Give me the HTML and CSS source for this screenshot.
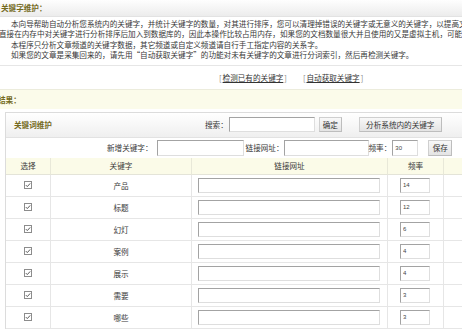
FILE: index.html
```html
<!DOCTYPE html>
<html lang="zh-CN">
<head>
<meta charset="utf-8">
<title>关键字维护</title>
<link rel="stylesheet" href="styles.css">
</head>
<body>
<div class="page">
  <div class="title-bar"><span class="title">关键字维护：</span></div>
  <div class="intro">
    <div class="line indent">本向导帮助自动分析您系统内的关键字，并统计关键字的数量，对其进行排序，您可以清理掉错误的关键字或无意义的关键字，以提高文</div>
    <div class="line cont">直接在内存中对关键字进行分析排序后加入到数据库的，因此本操作比较占用内存，如果您的文档数量很大并且使用的又是虚拟主机，可能无</div>
    <div class="line indent">本程序只分析文章频道的关键字数据，其它频道或自定义频道请自行手工指定内容的关系字。</div>
    <div class="line indent">如果您的文章是采集回来的，请先用“自动获取关键字”的功能对未有关键字的文章进行分词索引，然后再检测关键字。</div>
  </div>
  <div class="links">
    <span class="link-item"><span class="bracket">[</span><a href="#">检测已有的关键字</a><span class="bracket">]</span></span>
    <span class="link-item"><span class="bracket">[</span><a href="#">自动获取关键字</a><span class="bracket">]</span></span>
  </div>
  <div class="result-bar"><span class="result-title">结果：</span></div>
  <div class="panel-wrap">
    <div class="panel">
      <div class="panel-head">
        <span class="panel-title">关键词维护</span>
        <span class="label">搜索：</span>
        <input type="text" class="inp search-inp">
        <button class="btn btn-ok">确定</button>
        <button class="btn btn-analyze">分析系统内的关键字</button>
      </div>
      <div class="add-row">
        <span class="label add-label">新增关键字：</span>
        <input type="text" class="inp add-kw">
        <span class="label url-label">链接网址：</span>
        <input type="text" class="inp add-url">
        <span class="label freq-label">频率：</span>
        <input type="text" class="inp add-freq" value="30">
        <button class="btn btn-save">保存</button>
      </div>
      <table class="kw-table">
        <colgroup>
          <col class="c-sel"><col class="c-kw"><col class="c-url"><col class="c-freq"><col class="c-rest">
        </colgroup>
        <thead>
          <tr><th>选择</th><th>关键字</th><th>链接网址</th><th>频率</th><th></th></tr>
        </thead>
        <tbody>
          <tr><td><svg class="chk" width="8" height="8" viewBox="0 0 8 8"><rect x="0.5" y="0.5" width="7" height="7" fill="#fff" stroke="#8c8c8c"/><path d="M1.8 4.1 L3.3 5.6 L6.2 2.4" fill="none" stroke="#5a5a5a" stroke-width="1"/></svg></td><td>产品</td><td><input type="text" class="inp url-inp"></td><td><input type="text" class="inp freq-inp" value="14"></td><td></td></tr>
          <tr><td><svg class="chk" width="8" height="8" viewBox="0 0 8 8"><rect x="0.5" y="0.5" width="7" height="7" fill="#fff" stroke="#8c8c8c"/><path d="M1.8 4.1 L3.3 5.6 L6.2 2.4" fill="none" stroke="#5a5a5a" stroke-width="1"/></svg></td><td>标题</td><td><input type="text" class="inp url-inp"></td><td><input type="text" class="inp freq-inp" value="12"></td><td></td></tr>
          <tr><td><svg class="chk" width="8" height="8" viewBox="0 0 8 8"><rect x="0.5" y="0.5" width="7" height="7" fill="#fff" stroke="#8c8c8c"/><path d="M1.8 4.1 L3.3 5.6 L6.2 2.4" fill="none" stroke="#5a5a5a" stroke-width="1"/></svg></td><td>幻灯</td><td><input type="text" class="inp url-inp"></td><td><input type="text" class="inp freq-inp" value="6"></td><td></td></tr>
          <tr><td><svg class="chk" width="8" height="8" viewBox="0 0 8 8"><rect x="0.5" y="0.5" width="7" height="7" fill="#fff" stroke="#8c8c8c"/><path d="M1.8 4.1 L3.3 5.6 L6.2 2.4" fill="none" stroke="#5a5a5a" stroke-width="1"/></svg></td><td>案例</td><td><input type="text" class="inp url-inp"></td><td><input type="text" class="inp freq-inp" value="4"></td><td></td></tr>
          <tr><td><svg class="chk" width="8" height="8" viewBox="0 0 8 8"><rect x="0.5" y="0.5" width="7" height="7" fill="#fff" stroke="#8c8c8c"/><path d="M1.8 4.1 L3.3 5.6 L6.2 2.4" fill="none" stroke="#5a5a5a" stroke-width="1"/></svg></td><td>展示</td><td><input type="text" class="inp url-inp"></td><td><input type="text" class="inp freq-inp" value="4"></td><td></td></tr>
          <tr><td><svg class="chk" width="8" height="8" viewBox="0 0 8 8"><rect x="0.5" y="0.5" width="7" height="7" fill="#fff" stroke="#8c8c8c"/><path d="M1.8 4.1 L3.3 5.6 L6.2 2.4" fill="none" stroke="#5a5a5a" stroke-width="1"/></svg></td><td>需要</td><td><input type="text" class="inp url-inp"></td><td><input type="text" class="inp freq-inp" value="3"></td><td></td></tr>
          <tr><td><svg class="chk" width="8" height="8" viewBox="0 0 8 8"><rect x="0.5" y="0.5" width="7" height="7" fill="#fff" stroke="#8c8c8c"/><path d="M1.8 4.1 L3.3 5.6 L6.2 2.4" fill="none" stroke="#5a5a5a" stroke-width="1"/></svg></td><td>哪些</td><td><input type="text" class="inp url-inp"></td><td><input type="text" class="inp freq-inp" value="3"></td><td></td></tr>
        </tbody>
      </table>
    </div>
  </div>
</div>
</body>
</html>
```
FILE: styles.css
```css
html, body {
  margin: 0;
  padding: 0;
  background: #fff;
  overflow: hidden;
}
body {
  width: 462px;
  height: 334px;
  font-family: "Noto Sans CJK SC", "Noto Sans", sans-serif;
  font-size: 7.6px;
  color: #383838;
}
.page {
  width: 490px;
}
.title-bar {
  height: 16px;
  line-height: 15px;
  padding-left: 1px;
  background: linear-gradient(#fefefe, #ececec);
  border-bottom: 1px solid #e2e2e2;
}
.title, .result-title, .panel-title {
  font-weight: bold;
  color: #746a1c;
}
.intro {
  padding: 2px 0 4px 0;
  border-bottom: 1px solid #e6e6e6;
}
.line {
  white-space: nowrap;
  line-height: 10.4px;
}
.indent {
  padding-left: 11px;
}
.cont {
  margin-left: -1px;
}
.links {
  height: 23px;
  display: flex;
  align-items: center;
  gap: 14px;
  padding-left: 218px;
  white-space: nowrap;
}
.bracket {
  color: #888;
  padding: 0 1px;
}
.links a {
  color: #333;
  text-decoration: underline;
}
.result-bar {
  height: 19px;
  line-height: 19px;
  background: #fbfbea;
  border-top: 1px solid #ececdc;
}
.result-title {
  margin-left: -2px;
}
.panel-wrap {
  padding: 3px 0 0 5px;
}
.panel {
  width: 480px;
  border: 1px solid #dcdcdc;
  border-bottom: none;
}
.panel-head {
  height: 24px;
  display: flex;
  align-items: center;
  background: linear-gradient(#ffffff, #efefef);
  border-bottom: 1px solid #e2e2e2;
  white-space: nowrap;
}
.panel-title {
  width: 199px;
  padding-left: 8px;
  box-sizing: border-box;
  flex: none;
}
.label {
  white-space: nowrap;
  flex: none;
}
.inp {
  box-sizing: border-box;
  height: 15px;
  margin: 0;
  padding: 0 2px;
  border: 1px solid;
  border-color: #a3a3a3 #dedede #dedede #a3a3a3;
  background: #fff;
  font-family: "Liberation Sans", sans-serif;
  font-size: 6px;
  color: #444;
  flex: none;
  outline: none;
}
.search-inp {
  width: 86px;
  margin-left: 1px;
}
.btn {
  box-sizing: border-box;
  height: 15px;
  margin: 0;
  padding: 0 3px;
  border: 1px solid #cfcfcf;
  border-right-color: #bdbdbd;
  border-bottom-color: #bdbdbd;
  background: linear-gradient(#f8f8f8, #e4e4e4);
  font-family: "Noto Sans CJK SC", "Noto Sans", sans-serif;
  font-size: 7.6px;
  color: #333;
  line-height: 13px;
  flex: none;
}
.btn-ok {
  width: 23px;
  margin-left: 4px;
}
.btn-analyze {
  width: 83px;
  margin-left: 17px;
}
.add-row {
  height: 20px;
  display: flex;
  align-items: center;
  padding-left: 101px;
  white-space: nowrap;
}
.add-kw {
  width: 87px;
  height: 16px;
  margin-left: 4px;
}
.url-label {
  margin-left: 2px;
}
.add-url {
  width: 85px;
  height: 16px;
}
.add-freq {
  width: 26px;
  height: 16px;
  margin-left: 1px;
}
.btn-save {
  width: 24px;
  height: 16px;
  margin-left: 10px;
}
.kw-table {
  table-layout: fixed;
  width: 478px;
  border-collapse: separate;
  border-spacing: 0;
}
.c-sel { width: 45px; }
.c-kw { width: 141px; }
.c-url { width: 196px; }
.c-freq { width: 56px; }
.c-rest { width: 40px; }
.kw-table th {
  height: 16px;
  padding: 0;
  font-weight: normal;
  background: #fbfbe8;
  border-right: 1px solid #e8e8d8;
  border-bottom: 1px solid #e4e4d8;
  text-align: center;
  line-height: 15px;
}
.kw-table td {
  height: 21px;
  padding: 0;
  text-align: center;
  border-right: 1px solid #e6e6e6;
  border-bottom: 1px solid #e6e6e6;
  line-height: 0;
}
.kw-table td:nth-child(2) {
  line-height: 21px;
}
.kw-table td:nth-child(3),
.kw-table td:nth-child(4) {
  text-align: left;
}
.chk {
  display: inline-block;
  vertical-align: middle;
}
.url-inp {
  width: 182px;
  margin-left: 6px;
  vertical-align: middle;
}
.freq-inp {
  width: 30px;
  margin-left: 12px;
  vertical-align: middle;
}
```
